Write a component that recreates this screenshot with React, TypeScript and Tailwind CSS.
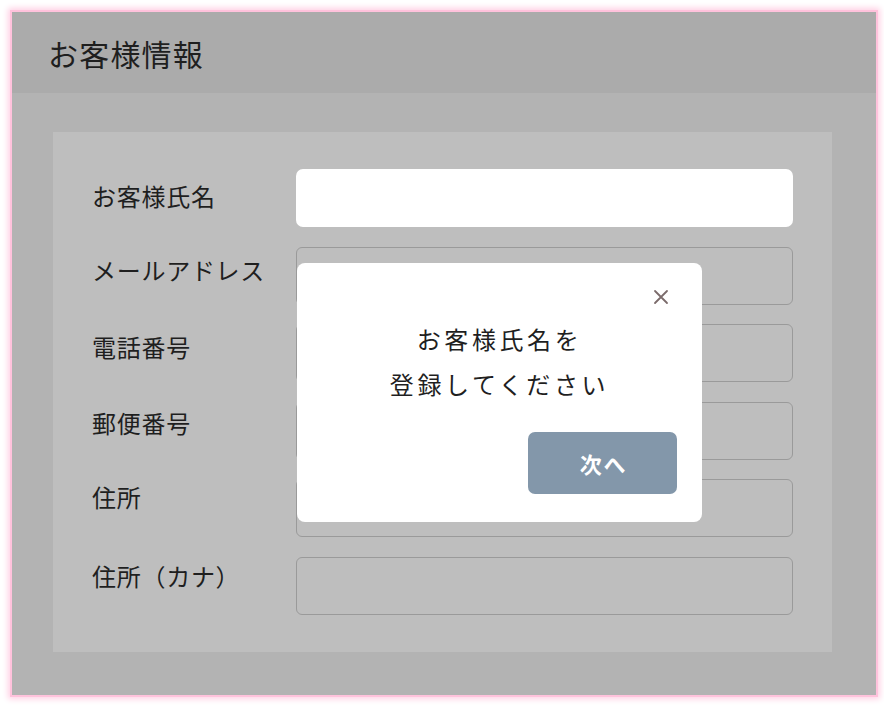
import React from "react";

// labels sit a little higher than their input as the form goes down
const fields = [
  { label: "お客様氏名", nudge: "-translate-y-[2px]" },
  { label: "メールアドレス", nudge: "-translate-y-[6px]" },
  { label: "電話番号", nudge: "-translate-y-[6px]" },
  { label: "郵便番号", nudge: "-translate-y-[8px]" },
  { label: "住所", nudge: "-translate-y-[11px]" },
  { label: "住所（カナ）", nudge: "-translate-y-[10px]" },
];

function CloseIcon() {
  return (
    <svg width="16" height="16" viewBox="0 0 16 16" fill="none">
      <path
        d="M2 2 L14 14 M14 2 L2 14"
        stroke="#7b6b6b"
        strokeWidth="1.8"
        strokeLinecap="round"
      />
    </svg>
  );
}

export default function App() {
  return (
    <div
      className="min-h-[708px] w-[884px] bg-white pt-[10px] pl-[10px] text-[#1f1f1f]"
      style={{ fontFamily: '"Noto Sans CJK JP", "Noto Sans", sans-serif' }}
    >
      <div className="relative flex h-[687px] w-[868px] flex-col border-2 border-[#ffc2dc] shadow-[0_0_6px_2px_#ffd0e4]">
        {/* header */}
        <div className="flex h-[81px] shrink-0 items-center bg-[#ababab] pl-[36px]">
          <h1 className="text-[30px] leading-none tracking-[0.04em]">
            お客様情報
          </h1>
        </div>

        {/* body */}
        <div className="flex-1 bg-[#b3b3b3] pt-[39px] pl-[41px]">
          <div className="flex w-[779px] flex-col gap-[19.6px] bg-[#bebebe] px-[39px] pt-[37px] pb-[37px]">
            {fields.map((f, i) => (
              <div key={f.label} className="flex items-center">
                <div
                  className={`w-[204px] shrink-0 text-[24px] leading-none tracking-[0.03em] ${f.nudge}`}
                >
                  {f.label}
                </div>
                <div
                  className={
                    i === 0
                      ? "h-[58px] flex-1 rounded-[7px] bg-white"
                      : "h-[58px] flex-1 rounded-[6px] border border-[#9a9a9a] bg-[#bebebe]"
                  }
                />
              </div>
            ))}
          </div>
        </div>

        {/* modal */}
        <div className="absolute left-[285px] top-[251px] flex h-[259px] w-[405px] flex-col rounded-[8px] bg-white px-[25px]">
          <div className="flex justify-end pt-[26px] pr-[8px]">
            <CloseIcon />
          </div>
          <div className="mt-[11px] text-center text-[24px] leading-[45px] tracking-[0.15em]">
            <p>お客様氏名を</p>
            <p>登録してください</p>
          </div>
          <div className="mt-[26px] flex justify-end">
            <button className="flex h-[62px] w-[149px] items-center justify-center rounded-[7px] bg-[#8397aa] pl-[2px] text-[22px] font-bold tracking-[0.08em] text-white">
              次へ
            </button>
          </div>
        </div>
      </div>
    </div>
  );
}
